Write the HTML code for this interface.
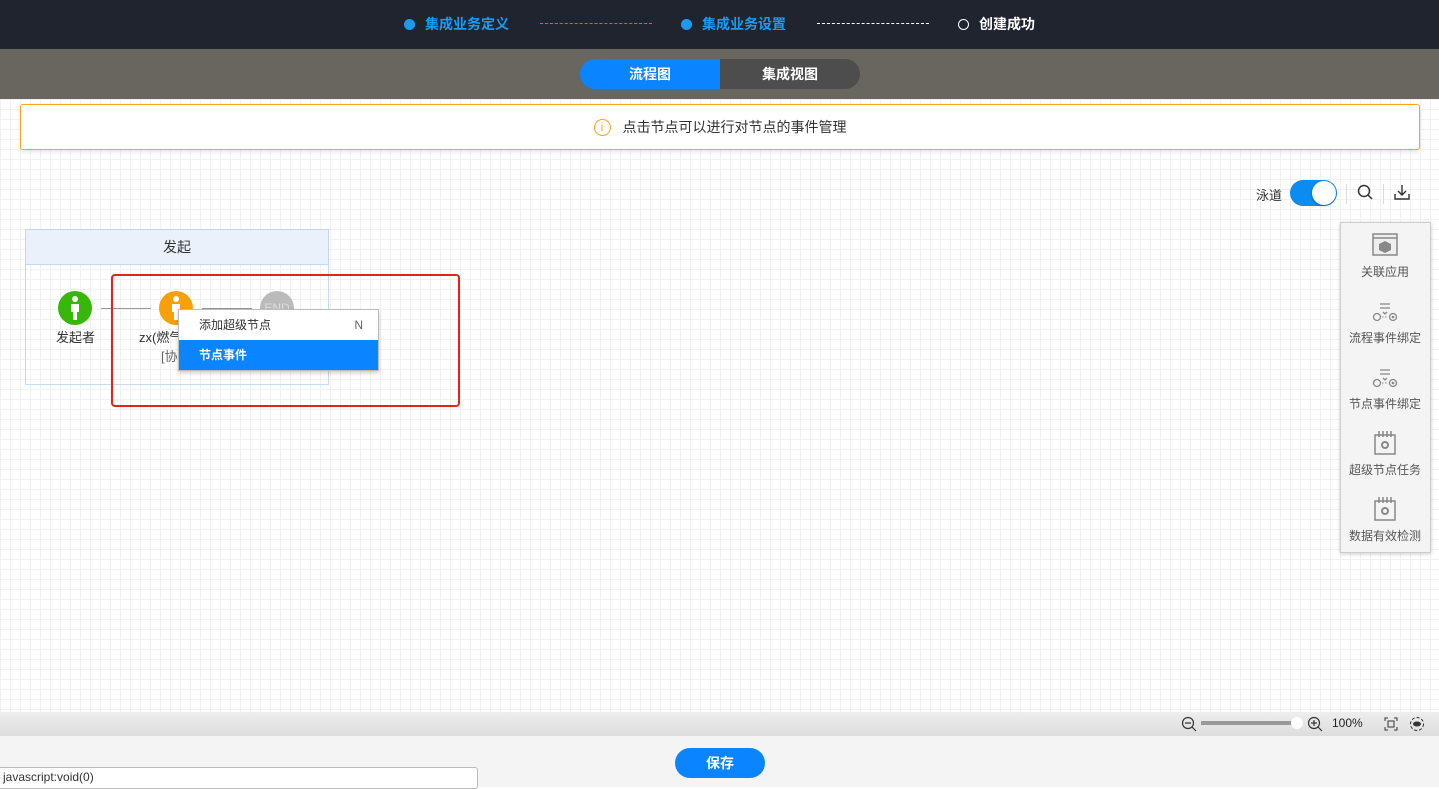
<!DOCTYPE html>
<html><head><meta charset="utf-8"><style>
*{margin:0;padding:0;box-sizing:border-box}
body{width:1439px;height:787px;overflow:hidden;position:relative;font-family:"Liberation Sans","Noto Sans CJK SC",sans-serif;background:#fff}
.abs{position:absolute}
.top{left:0;top:0;width:1439px;height:49px;background:#20242f}
.step{top:15px;font-size:14px;font-weight:bold;line-height:18px}
.dot{display:inline-block;width:11px;height:11px;border-radius:50%;margin-right:10px;vertical-align:-1px}
.bar2{left:0;top:49px;width:1439px;height:50px;background:#68665f}
.canvas{left:0;top:99px;width:1439px;height:613px;background-color:#fff;background-image:linear-gradient(#f1f1f1 1px,transparent 1px),linear-gradient(90deg,#f1f1f1 1px,transparent 1px);background-size:10px 10px}
.circle{width:34px;height:34px;border-radius:50%}
.lbl{font-size:13px;color:#333}
.pi{text-align:center;font-size:12px;color:#555;width:90px;left:1340px}
</style></head><body>
<div class="abs top"></div>
<div class="abs step" style="left:404px;color:#1a9bf0"><span class="dot" style="background:#1a9bf0"></span>集成业务定义</div>
<div class="abs" style="left:540px;top:23px;width:112px;border-top:1px dashed #1a9bf0"></div>
<div class="abs step" style="left:681px;color:#1a9bf0"><span class="dot" style="background:#1a9bf0"></span>集成业务设置</div>
<div class="abs" style="left:817px;top:23px;width:112px;border-top:1px dashed #fff"></div>
<div class="abs step" style="left:958px;color:#fff"><span class="dot" style="border:1.5px solid #fff"></span>创建成功</div>
<div class="abs bar2"></div>
<div class="abs" style="left:580px;top:59px;width:280px;height:30px;border-radius:15px;overflow:hidden;display:flex;font-size:14px;font-weight:bold;color:#fff;line-height:30px;text-align:center">
<div style="width:140px;background:#0a84ff">流程图</div><div style="width:140px;background:#4d4d4d">集成视图</div></div>
<div class="abs canvas"></div>
<div class="abs" style="left:20px;top:104px;width:1400px;height:46px;background:#fff;border:1px solid #f5a623;border-radius:3px;box-shadow:0 2px 4px rgba(0,0,0,.1);text-align:center;line-height:44px;font-size:14px;color:#333">
<span style="display:inline-block;width:17px;height:17px;border:1.3px solid #f5a623;border-radius:50%;color:#f5a623;font-size:12px;line-height:15px;vertical-align:1px;margin-right:12px">i</span>点击节点可以进行对节点的事件管理</div>

<div class="abs lbl" style="left:1256px;top:185px">泳道</div>
<div class="abs" style="left:1290px;top:180px;width:47px;height:26px;border-radius:13px;background:#0a8cf0"><div class="abs" style="left:22px;top:1px;width:24px;height:24px;border-radius:50%;background:#fff;box-shadow:0 1px 2px rgba(0,0,0,.3)"></div></div>
<div class="abs" style="left:1346px;top:184px;height:20px;border-left:1px solid #ddd"></div>
<svg class="abs" style="left:1357px;top:184px" width="16" height="16"><circle cx="7" cy="7" r="5.5" fill="none" stroke="#333" stroke-width="1.5"/><path d="M11 11l4 4" stroke="#333" stroke-width="1.5"/></svg>
<div class="abs" style="left:1383px;top:184px;height:20px;border-left:1px solid #ddd"></div>
<svg class="abs" style="left:1394px;top:184px" width="16" height="16"><path d="M8 1v10M4 7l4 4 4-4M1 10v5h14v-5" fill="none" stroke="#333" stroke-width="1.4"/></svg>

<div class="abs" style="left:1340px;top:222px;width:91px;height:331px;background:#f4f4f4;border:1px solid #ccc;box-shadow:0 1px 4px rgba(0,0,0,.2)"></div>
<svg class="abs" style="left:1372px;top:233px" width="26" height="23"><rect x="1" y="1" width="24" height="21" fill="#eee" stroke="#888" stroke-width="1.5"/><line x1="1" y1="5" x2="25" y2="5" stroke="#888" stroke-width="1.5"/><path d="M13 8l6 3v6l-6 3-6-3v-6z" fill="#888"/></svg>
<div class="abs pi" style="top:263px">关联应用</div>
<svg class="abs" style="left:1372px;top:302px" width="26" height="20"><path d="M8 2h10M8 6h10M11 10l2 2 2-2" stroke="#888" stroke-width="1.3" fill="none"/><circle cx="5" cy="15" r="3.5" fill="none" stroke="#888" stroke-width="1.3"/><circle cx="21" cy="15" r="3.5" fill="none" stroke="#888" stroke-width="1.3"/><circle cx="21" cy="15" r="1.3" fill="#888"/><path d="M10 15h6" stroke="#888" stroke-dasharray="1.5 1.5"/></svg>
<div class="abs pi" style="top:329px">流程事件绑定</div>
<svg class="abs" style="left:1372px;top:368px" width="26" height="20"><path d="M8 2h10M8 6h10M11 10l2 2 2-2" stroke="#888" stroke-width="1.3" fill="none"/><circle cx="5" cy="15" r="3.5" fill="none" stroke="#888" stroke-width="1.3"/><circle cx="21" cy="15" r="3.5" fill="none" stroke="#888" stroke-width="1.3"/><circle cx="21" cy="15" r="1.3" fill="#888"/><path d="M10 15h6" stroke="#888" stroke-dasharray="1.5 1.5"/></svg>
<div class="abs pi" style="top:395px">节点事件绑定</div>
<svg class="abs" style="left:1374px;top:430px" width="22" height="25"><rect x="1" y="5" width="20" height="19" fill="none" stroke="#888" stroke-width="1.5"/><path d="M5 1v6M9 1v6M13 1v6M17 1v6" stroke="#888" stroke-width="1.5"/><circle cx="11" cy="15" r="3" fill="none" stroke="#888" stroke-width="2"/></svg>
<div class="abs pi" style="top:461px">超级节点任务</div>
<svg class="abs" style="left:1374px;top:496px" width="22" height="25"><rect x="1" y="5" width="20" height="19" fill="none" stroke="#888" stroke-width="1.5"/><path d="M5 1v6M9 1v6M13 1v6M17 1v6" stroke="#888" stroke-width="1.5"/><circle cx="11" cy="15" r="3" fill="none" stroke="#888" stroke-width="2"/></svg>
<div class="abs pi" style="top:527px">数据有效检测</div>

<div class="abs" style="left:25px;top:229px;width:304px;height:156px;border:1px solid #c9d9ee"></div>
<div class="abs" style="left:25px;top:229px;width:304px;height:36px;background:#ebf1fa;border:1px solid #c5d7ee;text-align:center;line-height:34px;font-size:14px;color:#333">发起</div>
<div class="abs" style="left:101px;top:308px;width:50px;border-top:1px solid #999"></div>
<div class="abs" style="left:202px;top:308px;width:50px;border-top:1px solid #999"></div>
<div class="abs circle" style="left:58px;top:291px;background:#38b60a"></div>
<svg class="abs" style="left:68px;top:295px" width="14" height="26"><circle cx="7" cy="4" r="3" fill="#fff"/><path d="M3 9h8v8h-2v8h-4v-8h-2z" fill="#fff"/></svg>
<div class="abs lbl" style="left:56px;top:327px">发起者</div>
<div class="abs circle" style="left:159px;top:291px;background:#f9a009"></div>
<svg class="abs" style="left:169px;top:295px" width="14" height="26"><circle cx="7" cy="4" r="3" fill="#fff"/><path d="M3 9h8v8h-2v8h-4v-8h-2z" fill="#fff"/></svg>
<div class="abs circle" style="left:260px;top:291px;background:#bbb;color:#ddd;font-size:12px;text-align:center;line-height:34px">END</div>
<div class="abs lbl" style="left:139px;top:327px">zx(燃气</div>
<div class="abs lbl" style="left:161px;top:346px;color:#666">[协</div>
<div class="abs" style="left:178px;top:309px;width:201px;height:62px;background:#fff;border:1px solid #bbb;box-shadow:0 2px 4px rgba(0,0,0,.2);font-size:12px">
<div style="height:30px;line-height:30px;padding-left:20px;color:#333">添加超级节点<span style="float:right;margin-right:15px;color:#666">N</span></div>
<div style="height:30px;line-height:30px;padding-left:20px;color:#fff;background:#0a84ff;font-weight:bold">节点事件</div></div>
<div class="abs" style="left:111px;top:274px;width:349px;height:133px;border:2px solid #e9211c;border-radius:4px"></div>

<div class="abs" style="left:0;top:712px;width:1439px;height:24px;background:linear-gradient(#eee,#ddd)"></div>
<svg class="abs" style="left:1181px;top:716px" width="16" height="16"><circle cx="7" cy="7" r="5.5" fill="none" stroke="#333" stroke-width="1.2"/><path d="M4 7h6M11 11l4 4" stroke="#333" stroke-width="1.2"/></svg>
<div class="abs" style="left:1201px;top:721px;width:95px;height:4px;background:#999"></div>
<div class="abs" style="left:1291px;top:717px;width:12px;height:12px;border-radius:50%;background:#fff"></div>
<svg class="abs" style="left:1307px;top:716px" width="16" height="16"><circle cx="7" cy="7" r="5.5" fill="none" stroke="#333" stroke-width="1.2"/><path d="M4 7h6M7 4v6M11 11l4 4" stroke="#333" stroke-width="1.2"/></svg>
<div class="abs" style="left:1332px;top:716px;font-size:12px;color:#222">100%</div>
<svg class="abs" style="left:1384px;top:717px" width="14" height="14"><path d="M1 4V1h3M10 1h3v3M13 10v3h-3M4 13H1v-3" fill="none" stroke="#333"/><rect x="4" y="4" width="6" height="6" fill="none" stroke="#333"/></svg>
<svg class="abs" style="left:1409px;top:716px" width="16" height="16"><circle cx="8" cy="8" r="6.5" fill="none" stroke="#333" stroke-dasharray="3 2"/><ellipse cx="8" cy="8" rx="4" ry="2.5" fill="#333"/></svg>
<div class="abs" style="left:0;top:736px;width:1439px;height:51px;background:#f4f4f4"></div>
<div class="abs" style="left:675px;top:748px;width:90px;height:30px;border-radius:15px;background:#0a84ff;color:#fff;font-size:14px;font-weight:bold;text-align:center;line-height:30px">保存</div>
<div class="abs" style="left:-2px;top:767px;width:480px;height:22px;background:#fff;border:1px solid #bbb;border-radius:3px;font-size:12px;color:#333;padding-left:4px;line-height:19px">javascript:void(0)</div>
</body></html>
